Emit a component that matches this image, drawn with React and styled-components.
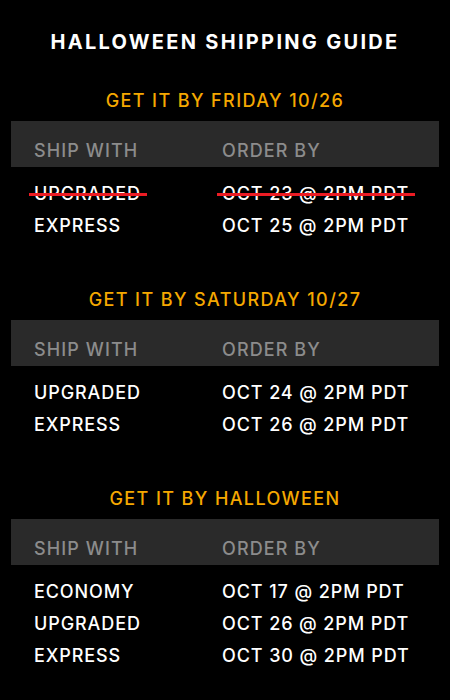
import React from 'react'
import styled, { createGlobalStyle } from 'styled-components'

const GlobalStyle = createGlobalStyle`
    html, body {
        margin: 0;
        padding: 0;
        background: #000;
    }
    body {
        font-family: Inter, "Liberation Sans", sans-serif;
    }
`

const Page = styled.div`
    width: 450px;
    height: 700px;
    background: #000;
    padding-top: 30px;
    box-sizing: border-box;
    overflow: hidden;
`

const Title = styled.h1`
    margin: 0 0 35px;
    font-size: 20px;
    line-height: 24px;
    font-weight: 700;
    letter-spacing: 2.3px;
    color: #fff;
    text-align: center;
`

const Section = styled.section`
    margin-bottom: 46px;
`

const Heading = styled.h2`
    margin: 0 0 8px;
    font-size: 18px;
    line-height: 24px;
    font-weight: 500;
    letter-spacing: 1.4px;
    color: #f5a800;
    text-align: center;
`

const Grid = styled.div`
    display: grid;
    grid-template-columns: 188px 1fr;
    padding: 0 23px;
`

const HeadBar = styled(Grid)`
    margin: 0 11px 11px;
    height: 46px;
    padding: 18px 23px 4px;
    box-sizing: border-box;
    background: #2a2a2a;
    color: #8c8c8c;
    font-size: 18px;
    line-height: 24px;
    font-weight: 500;
    letter-spacing: 1.1px;
`

const Row = styled(Grid)`
    margin: 0 11px;
    color: #fff;
    font-size: 18px;
    line-height: 32px;
    font-weight: 500;
    letter-spacing: 0.9px;
`

const Cell = styled.span`
    position: relative;
    justify-self: start;
    white-space: nowrap;

    ${({ struck }) => struck && `
        &::after {
            content: '';
            position: absolute;
            left: -5px;
            right: -6px;
            top: 15px;
            height: 3px;
            background: #ec1c24;
        }
    `}
`

const sections = [
    {
        heading: 'GET IT BY FRIDAY 10/26',
        rows: [
            { ship: 'UPGRADED', order: 'OCT 23 @ 2PM PDT', struck: true },
            { ship: 'EXPRESS', order: 'OCT 25 @ 2PM PDT' },
        ],
    },
    {
        heading: 'GET IT BY SATURDAY 10/27',
        rows: [
            { ship: 'UPGRADED', order: 'OCT 24 @ 2PM PDT' },
            { ship: 'EXPRESS', order: 'OCT 26 @ 2PM PDT' },
        ],
    },
    {
        heading: 'GET IT BY HALLOWEEN',
        rows: [
            { ship: 'ECONOMY', order: 'OCT 17 @ 2PM PDT' },
            { ship: 'UPGRADED', order: 'OCT 26 @ 2PM PDT' },
            { ship: 'EXPRESS', order: 'OCT 30 @ 2PM PDT' },
        ],
    },
]

function App () {
    return (
        <Page>
            <GlobalStyle />
            <Title>HALLOWEEN SHIPPING GUIDE</Title>
            { sections.map(section => (
                <Section key={section.heading}>
                    <Heading>{ section.heading }</Heading>
                    <HeadBar>
                        <span>SHIP WITH</span>
                        <span>ORDER BY</span>
                    </HeadBar>
                    { section.rows.map(row => (
                        <Row key={row.ship}>
                            <Cell struck={row.struck}>{ row.ship }</Cell>
                            <Cell struck={row.struck}>{ row.order }</Cell>
                        </Row>
                    )) }
                </Section>
            )) }
        </Page>
    )
}

export default App
